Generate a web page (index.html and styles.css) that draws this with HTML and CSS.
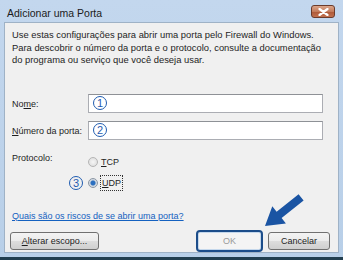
FILE: index.html
```html
<!DOCTYPE html>
<html lang="pt">
<head>
    <meta charset="UTF-8">
    <meta name="viewport" content="width=device-width, initial-scale=1.0">
    <title>Adicionar uma Porta</title>
    <link rel="stylesheet" href="styles.css">
</head>
<body>
    <div class="window">
        <!-- Barra de título -->
        <div class="titlebar">
            <span class="title">Adicionar uma Porta</span>
            <button class="close-btn" aria-label="Fechar">
                <svg width="11" height="8" viewBox="0 0 11 8">
                    <path d="M1.5 1 L9.5 7 M9.5 1 L1.5 7" stroke="#fff" stroke-width="2.2" stroke-linecap="round"/>
                </svg>
            </button>
        </div>

        <!-- Conteúdo -->
        <div class="panel">
            <p class="desc">Use estas configurações para abrir uma porta pelo Firewall do Windows.<br>Para descobrir o número da porta e o protocolo, consulte a documentação<br>do programa ou serviço que você deseja usar.</p>

            <div class="fields">
                <label class="field-label">No<u>m</u>e:</label>
                <div class="input"><span class="num">1</span></div>

                <label class="field-label"><u>N</u>úmero da porta:</label>
                <div class="input"><span class="num">2</span></div>

                <label class="field-label proto-label">Protocolo:</label>
                <div class="options">
                    <div class="option">
                        <span class="radio"></span>
                        <span><u>T</u>CP</span>
                    </div>
                    <div class="option">
                        <span class="num num-side">3</span>
                        <span class="radio checked"></span>
                        <span class="focus"><u>U</u>DP</span>
                    </div>
                </div>
            </div>

            <a class="link" href="#">Quais são os riscos de se abrir uma porta?</a>

            <div class="footer">
                <button class="btn btn-wide"><u>A</u>lterar escopo...</button>
                <div class="spacer"></div>
                <button class="btn btn-ok">OK</button>
                <button class="btn btn-cancel">Cancelar</button>
            </div>
        </div>
        <div class="frame-bottom"></div>

        <!-- Seta indicativa -->
        <svg class="arrow" width="60" height="45" viewBox="255 190 60 45">
            <polygon fill="#1a54a3" points="265,226 272.3,206.2 276.6,211.7 298.6,194.3 303.6,200.5 281.6,217.9 285.9,223.4"/>
        </svg>
    </div>
</body>
</html>
```

FILE: styles.css
```css
body {
    margin: 0;
    padding: 0;
    font-family: 'Liberation Sans', Arial, sans-serif;
    background-color: #bcd2ea;
}

.window {
    position: relative;
    width: 343px;
    height: 260px;
    display: flex;
    flex-direction: column;
    background: linear-gradient(#c3d7ee, #b8cfe8);
    overflow: hidden;
}

.titlebar {
    height: 22px;
    display: flex;
    align-items: center;
    padding: 0 8px 0 7px;
}

.title {
    flex: 1;
    font-size: 10.5px;
    color: #1b1b1b;
    padding-top: 3px;
}

.close-btn {
    width: 24px;
    height: 13px;
    margin-top: 1px;
    padding: 0;
    display: flex;
    align-items: center;
    justify-content: center;
    border: 1px solid #6b3b2b;
    border-radius: 3px;
    background: linear-gradient(#dba58b, #c47c5c 50%, #ad5838 51%, #c2714f);
}

.panel {
    flex: 1;
    margin: 0 4px;
    padding: 6px 8px 0 7px;
    background-color: #f0f0f0;
    border: 1px solid #9fb2c6;
    display: flex;
    flex-direction: column;
    color: #1e1e1e;
    font-size: 9px;
}

.desc {
    margin: 0;
    font-size: 9.4px;
    line-height: 12.5px;
    white-space: nowrap;
}

.fields {
    display: grid;
    grid-template-columns: 76px 235px;
    row-gap: 8px;
    margin-top: 27px;
}

.field-label {
    align-self: center;
    padding-top: 2px;
}

.input {
    height: 17px;
    background-color: #fff;
    border: 1px solid #abadb3;
    border-top-color: #8e9196;
    display: flex;
    align-items: center;
    padding-left: 4px;
}

.num {
    width: 12px;
    height: 12px;
    border: 1.4px solid #1f5cb0;
    border-radius: 50%;
    color: #1f5cb0;
    font-size: 11px;
    line-height: 12px;
    text-align: center;
    display: inline-block;
}

.proto-label {
    align-self: start;
    margin-top: 3px;
}

.options {
    display: flex;
    flex-direction: column;
    gap: 8px;
    margin-top: 8px;
}

.option {
    position: relative;
    display: flex;
    align-items: center;
    gap: 3px;
    height: 13px;
}

.num-side {
    position: absolute;
    right: calc(100% + 5px);
    top: -1px;
}

.radio {
    width: 8px;
    height: 8px;
    border-radius: 50%;
    border: 1px solid #b5b5b5;
    background: radial-gradient(#f6f6f6, #d9d9d9);
}

.radio.checked {
    border-color: #8b96a3;
    background: radial-gradient(circle, #2b6fc0 0, #2b6fc0 2px, #c9d3de 3px, #eef1f4);
}

.focus {
    outline: 1px dotted #333;
    padding: 2px 1px;
}

.link {
    margin-top: 21px;
    color: #1461c0;
    text-decoration: underline;
    align-self: flex-start;
}

.footer {
    display: flex;
    align-items: center;
    gap: 5px;
    margin-top: 9px;
    margin-left: -2px;
}

.spacer {
    flex: 1;
}

.btn {
    height: 18px;
    padding: 0;
    font-family: 'Liberation Sans', Arial, sans-serif;
    font-size: 9px;
    color: #1e1e1e;
    border: 1px solid #707070;
    border-radius: 3px;
    background: linear-gradient(#f3f3f3, #ebebeb 50%, #dddddd 51%, #cfcfcf);
}

.btn-wide {
    width: 89px;
}

.btn-ok {
    width: 67px;
    height: 22px;
    color: #9a9a9a;
    border: 2px solid #1c4d8a;
    border-radius: 4px;
    background: #f4f4f4;
    box-shadow: inset 0 0 0 1px #c5d8ec;
}

.btn-cancel {
    width: 62px;
}

.frame-bottom {
    height: 3px;
    margin-top: 4px;
    background-color: #213e4f;
}

.arrow {
    position: absolute;
    left: 255px;
    top: 190px;
}
```
